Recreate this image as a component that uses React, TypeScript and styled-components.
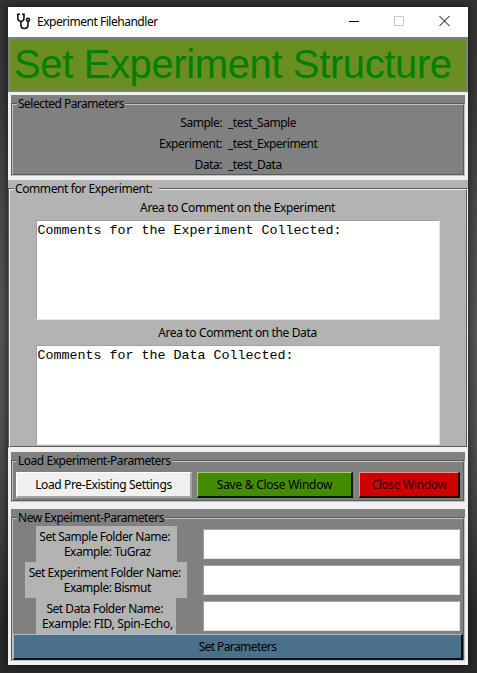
import React from "react";
import styled, { createGlobalStyle } from "styled-components";

const Global = createGlobalStyle`
  * { box-sizing: border-box; }
  html, body { margin: 0; padding: 0; }
  body { font: 12px/15px "Noto Sans", "Open Sans", sans-serif; color: #000; }
`;

const Desktop = styled.div`
  width: 477px;
  height: 673px;
  padding: 7px 9px 8px 8px;
  overflow: hidden;
  background: linear-gradient(to bottom, #333 0, #383838 100px, #484848 200px, #555 330px, #505050 430px, #404040 520px, #2b2b2d 610px, #29292a 673px);
`;

const Window = styled.main`
  width: 460px;
  height: 658px;
  background: #f0f0f0;
  box-shadow: 0 0 7px 1px rgba(0, 0, 0, 0.55);
`;

const TitleBar = styled.header`
  height: 30px;
  display: flex;
  align-items: center;
  padding: 0 18px 2px 8px;
  background: #fff;
`;

const Caption = styled.div`
  flex: 1;
  display: flex;
  align-items: center;
  gap: 6px;
`;

const Controls = styled.div`
  display: flex;
  gap: 35px;
  svg { display: block; }
`;

const Text = styled.span<{ $ls?: number }>`
  display: block;
  white-space: pre;
  letter-spacing: ${(p) => p.$ls ?? -0.47}px;
`;

const Banner = styled.h1`
  margin: 0;
  height: 55px;
  border: 2px solid #808080;
  padding-left: 4px;
  background: #6b8e23;
  color: #008000;
  font: 40px/50px "Liberation Sans", Arial, sans-serif;
  letter-spacing: -0.38px;
  white-space: nowrap;
`;

const Frame = styled.section<{ $bg: string; $h: number; $wide?: boolean; $gap: number }>`
  width: ${(p) => (p.$wide ? 460 : 454)}px;
  height: ${(p) => p.$h}px;
  margin: ${(p) => p.$gap}px 0 0 ${(p) => (p.$wide ? 0 : 3)}px;
  padding-top: 8px;
  background: ${(p) => p.$bg};
`;

const Groove = styled.div<{ $light: string }>`
  position: relative;
  height: 100%;
  border: 1px solid;
  border-color: #5a5a5a ${(p) => p.$light} ${(p) => p.$light} #5a5a5a;
`;

const GrooveInner = styled.div<{ $light: string }>`
  height: 100%;
  border: 1px solid;
  border-color: ${(p) => p.$light} #5a5a5a #5a5a5a ${(p) => p.$light};
`;

const Legend = styled.div<{ $bg: string }>`
  position: absolute;
  left: 5px;
  top: -8px;
  padding: 0 1px;
  background: ${(p) => p.$bg};
`;

const Pairs = styled.dl`
  margin: 0;
  padding-top: 7px;
  display: grid;
  grid-template-columns: 209px 1fr;
  grid-auto-rows: 21px;
  column-gap: 6px;
  align-items: center;
`;
const Key = styled.dt`
  justify-self: end;
`;
const Value = styled.dd`
  margin: 0;
`;

const Comments = styled.div`
  display: flex;
  flex-direction: column;
  align-items: center;
  padding: 5px 1px 0 0;
`;
const AreaLabel = styled.label`
  height: 25px;
  padding-top: 5px;
`;
const Area = styled.div`
  width: 404px;
  height: 100px;
  padding: 2px 1px;
  border: 1px solid;
  border-color: #a0a0a0 #e3e3e3 #e3e3e3 #a0a0a0;
  background: #fff;
  font: 13.33px/16px "Liberation Mono", "Courier New", monospace;
`;

const ButtonRow = styled.div`
  display: flex;
  padding: 10px 0 0 3px;
`;

const Button = styled.button<{ $bg: string; $w: number; $light: string; $dark: string; $gap?: number; $color?: string }>`
  width: ${(p) => p.$w}px;
  height: 26px;
  margin: 0 0 0 ${(p) => p.$gap ?? 0}px;
  padding: 0;
  display: flex;
  align-items: center;
  justify-content: center;
  border: solid;
  border-width: 1px 2px 2px 1px;
  border-color: ${(p) => `${p.$light} ${p.$dark} ${p.$dark} ${p.$light}`};
  background: ${(p) => p.$bg};
  color: ${(p) => p.$color ?? "#000"};
  font: inherit;
`;

const Fields = styled.div`
  display: grid;
  grid-template-columns: 186px 257px;
  grid-auto-rows: 36px;
  padding: 7px 0 0 0;
  column-gap: 4px;
`;
const Hint = styled.div<{ $w: number }>`
  width: ${(p) => p.$w}px;
  height: 36px;
  display: flex;
  flex-direction: column;
  align-items: center;
  justify-self: center;
  padding-top: 3px;
  background: #b3b3b3;
`;
const Entry = styled.input`
  width: 257px;
  height: 30px;
  margin: 3px 0 0;
  padding: 0 4px;
  border: 1px solid;
  border-color: #a0a0a0 #e3e3e3 #e3e3e3 #a0a0a0;
  background: #fff;
`;

const GREY = "#808080";
const SILVER = "#b3b3b3";

type GroupProps = {
  title: string;
  ls?: number;
  bg: string;
  light?: string;
  h: number;
  gap: number;
  wide?: boolean;
  children: React.ReactNode;
};

function Group({ title, ls, bg, light = "#c2c2c2", h, gap, wide, children }: GroupProps) {
  return (
    <Frame $bg={bg} $h={h} $gap={gap} $wide={wide}>
      <Groove $light={light}>
        <GrooveInner $light={light}>{children}</GrooveInner>
        <Legend $bg={bg}><Text $ls={ls}>{title}</Text></Legend>
      </Groove>
    </Frame>
  );
}

const params = [
  ["Sample:", "_test_Sample"],
  ["Experiment:", "_test_Experiment"],
  ["Data:", "_test_Data"],
];

const fields = [
  { w: 141, a: "Set Sample Folder Name: ", b: " Example: TuGraz" },
  { w: 162, a: "Set Experiment Folder Name: ", b: " Example: Bismut" },
  { w: 140, a: "Set Data Folder Name: ", b: " Example: FID, Spin-Echo,", ls: -0.3 },
];

export default function App() {
  return (
    <Desktop>
      <Global />
      <Window>
        <TitleBar>
          <Caption>
            <svg width="15" height="18" viewBox="0 0 15 18" fill="none" stroke="#111" strokeWidth="1.6">
              <path d="M4 2.2H1.8V5.7C1.8 8 3 9.3 4.9 9.3S8 8 8 5.7V2.2H6" />
              <path d="M4.9 9.3V12.7C4.9 15.2 6.2 16.5 8.3 16.5S12 15.2 12 12.7V9.2" />
              <circle cx="12" cy="7.8" r="1.5" />
            </svg>
            <Text>Experiment Filehandler</Text>
          </Caption>
          <Controls>
            <svg width="10" height="10" stroke="#000"><path d="M0 5.5H10" /></svg>
            <svg width="10" height="10" stroke="#c8c8c8" fill="none"><path d="M.5.5h9v9h-9z" /></svg>
            <svg width="11" height="10" stroke="#000"><path d="M.5 0L10.5 10M10.5 0L.5 10" /></svg>
          </Controls>
        </TitleBar>
        <Banner>Set Experiment Structure</Banner>

        <Group title="Selected Parameters" ls={-0.52} bg={GREY} h={81} gap={3}>
          <Pairs>
            {params.map(([k, v]) => (
              <React.Fragment key={k}>
                <Key><Text>{k}</Text></Key>
                <Value><Text>{v}</Text></Value>
              </React.Fragment>
            ))}
          </Pairs>
        </Group>

        <Group title="Comment for Experiment:  " ls={-0.4} bg={SILVER} light="#f4f4f4" h={268} gap={4} wide>
          <Comments>
            <AreaLabel><Text $ls={-0.37}>Area to Comment on the Experiment</Text></AreaLabel>
            <Area>Comments for the Experiment Collected:</Area>
            <AreaLabel><Text $ls={-0.37}>Area to Comment on the Data</Text></AreaLabel>
            <Area>Comments for the Data Collected:</Area>
          </Comments>
        </Group>

        <Group title="Load Experiment-Parameters" bg={GREY} h={50} gap={4}>
          <ButtonRow>
            <Button $bg="#f0f0f0" $w={176} $light="#fff" $dark="#a5a5a5"><Text $ls={-0.37}>Load Pre-Existing Settings</Text></Button>
            <Button $bg="#458b00" $w={156} $gap={5} $light="#a5c880" $dark="#0b1700"><Text $ls={-0.26}>Save &amp; Close Window</Text></Button>
            <Button $bg="#cd0000" $w={101} $gap={6} $light="#f29090" $dark="#220000" $color="#240000"><Text $ls={-0.32}>Close Window</Text></Button>
          </ButtonRow>
        </Group>

        <Group title="New Expeiment-Parameters" bg={GREY} h={152} gap={7}>
          <Fields>
            {fields.map((f) => (
              <React.Fragment key={f.a}>
                <Hint $w={f.w}><Text>{f.a}</Text><Text $ls={f.ls}>{f.b}</Text></Hint>
                <Entry aria-label={f.a.trim()} />
              </React.Fragment>
            ))}
          </Fields>
          <Button $bg="#4a708b" $w={450} $light="#a5bccb" $dark="#081018"><Text $ls={-0.6}>Set Parameters</Text></Button>
        </Group>
      </Window>
    </Desktop>
  );
}
